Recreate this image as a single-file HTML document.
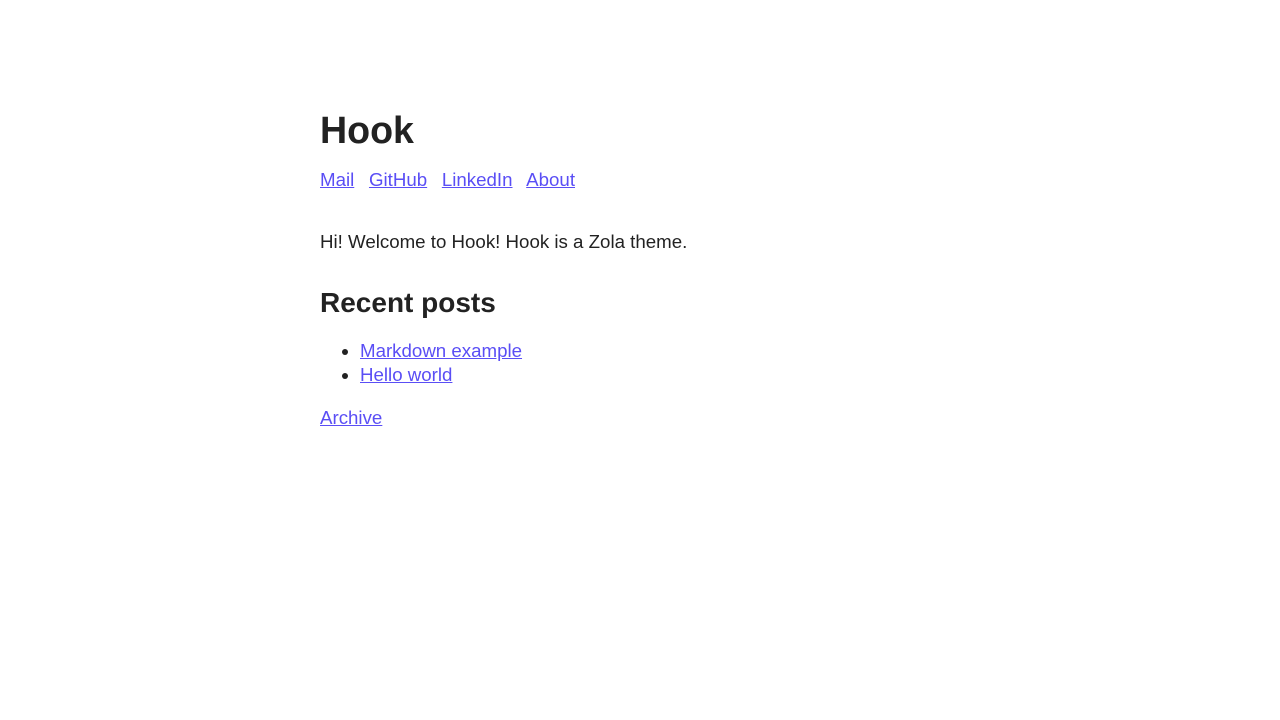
<!DOCTYPE html>
<html><head><meta charset="utf-8"><style>
body{margin:0;background:#fff;font-family:"Liberation Sans",sans-serif;color:#222;font-size:18.7px;line-height:24px}
.c{position:absolute;left:320px;top:0;width:640px}
h1{position:absolute;top:108px;margin:0;font-size:37.6px;line-height:44px;font-weight:bold;white-space:nowrap}
nav{position:absolute;top:168px;white-space:nowrap}
a{color:#5a4ef5;text-decoration:underline}
nav a{margin-right:9.5px}
p{position:absolute;top:230px;margin:0;white-space:nowrap}
h2{position:absolute;top:287px;margin:0;font-size:28px;line-height:32px;white-space:nowrap}
ul{position:absolute;top:339px;margin:0;padding-left:40px;white-space:nowrap}
.ar{position:absolute;top:406px}
</style></head><body><div class="c">
<h1>Hook</h1>
<nav><a>Mail</a> <a>GitHub</a> <a>LinkedIn</a> <a>About</a></nav>
<p>Hi! Welcome to Hook! Hook is a Zola theme.</p>
<h2>Recent posts</h2>
<ul><li><a>Markdown example</a></li><li><a>Hello world</a></li></ul>
<a class="ar">Archive</a>
</div></body></html>
